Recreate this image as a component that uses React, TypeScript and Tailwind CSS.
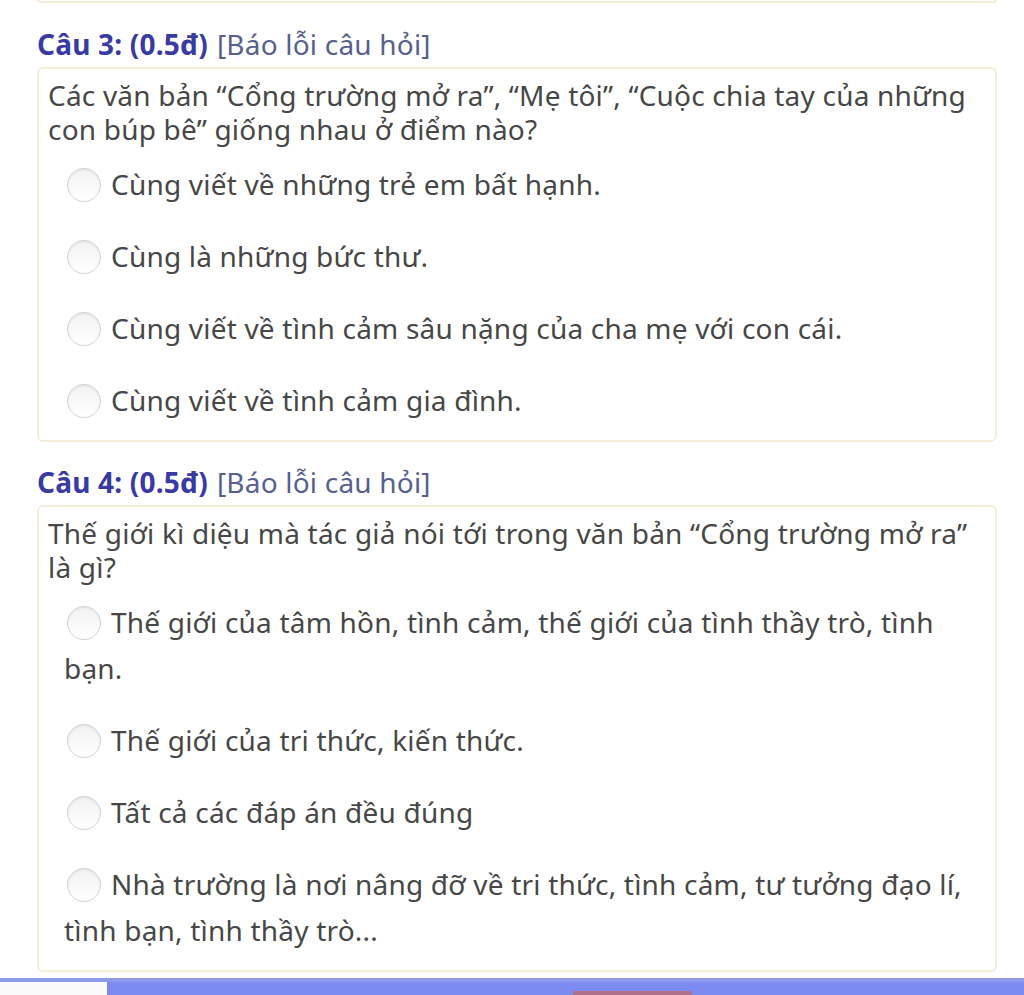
import React from 'react';

const font = { fontFamily: '"Noto Sans", "Open Sans", sans-serif' };

function Radio() {
  return (
    <span className="inline-block align-middle w-[34px] h-[34px] rounded-full border border-[#d4d4d4] bg-gradient-to-b from-[#f2f2f2] to-white shadow-[inset_0_1px_2px_rgba(0,0,0,0.08)] ml-[3px] mr-[10px] -mt-[6px]" />
  );
}

function Option({ children }: { children: React.ReactNode }) {
  return (
    <div className="pl-[16px] pr-2 py-[13px] leading-[46px]">
      <Radio />
      {children}
    </div>
  );
}

function Question({
  num,
  text,
  options,
}: {
  num: number;
  text: React.ReactNode;
  options: React.ReactNode[];
}) {
  return (
    <div>
      <div className="h-[34px] flex items-center text-[28px] leading-none tracking-[0.2px]">
        <span className="font-bold text-[#3a3aa3]">Câu {num}: (0.5đ)</span>
        <span className="ml-[9px] text-[#56618f]">[Báo lỗi câu hỏi]</span>
      </div>
      <div className="mt-[6px] border-2 border-[#f5edda] rounded-[6px] pl-[9px] pr-3 pt-[9px] pb-[4px]">
        <div className="leading-[34px] mb-[2px]">{text}</div>
        {options.map((o, i) => (
          <Option key={i}>{o}</Option>
        ))}
      </div>
    </div>
  );
}

export default function App() {
  return (
    <div
      className="w-[1024px] h-[995px] bg-white overflow-hidden flex flex-col text-[#474747] text-[28px] tracking-[0.2px]"
      style={font}
    >
      <div className="pl-[37px] pr-[27px] flex-1">
        <div className="h-[4px] border-2 border-t-0 border-[#f5edda] rounded-b-[6px] -mt-[1px]" />
        <div className="mt-[24px]">
          <Question
            num={3}
            text={
              <>
                Các văn bản “Cổng trường mở ra”, “Mẹ tôi”, “Cuộc chia tay của những
                <br />
                con búp bê” giống nhau ở điểm nào?
              </>
            }
            options={[
              'Cùng viết về những trẻ em bất hạnh.',
              'Cùng là những bức thư.',
              'Cùng viết về tình cảm sâu nặng của cha mẹ với con cái.',
              'Cùng viết về tình cảm gia đình.',
            ]}
          />
          <div className="mt-[23px]">
            <Question
              num={4}
              text={
                <>
                  Thế giới kì diệu mà tác giả nói tới trong văn bản “Cổng trường mở ra”
                  <br />
                  là gì?
                </>
              }
              options={[
                <>
                  Thế giới của tâm hồn, tình cảm, thế giới của tình thầy trò, tình
                  <br />
                  bạn.
                </>,
                'Thế giới của tri thức, kiến thức.',
                'Tất cả các đáp án đều đúng',
                <>
                  Nhà trường là nơi nâng đỡ về tri thức, tình cảm, tư tưởng đạo lí,
                  <br />
                  tình bạn, tình thầy trò...
                </>,
              ]}
            />
          </div>
        </div>
      </div>
      <div className="h-[17px] flex flex-col">
        <div className="h-[4px] bg-[#8e9be8]" />
        <div className="flex-1 flex">
          <div className="w-[107px] bg-[#fafafa]" />
          <div className="flex-1 bg-[#7b8bf0] relative">
            <div className="absolute left-[466px] bottom-0 w-[119px] h-[4px] bg-[#b16f8e]" />
          </div>
        </div>
      </div>
    </div>
  );
}
